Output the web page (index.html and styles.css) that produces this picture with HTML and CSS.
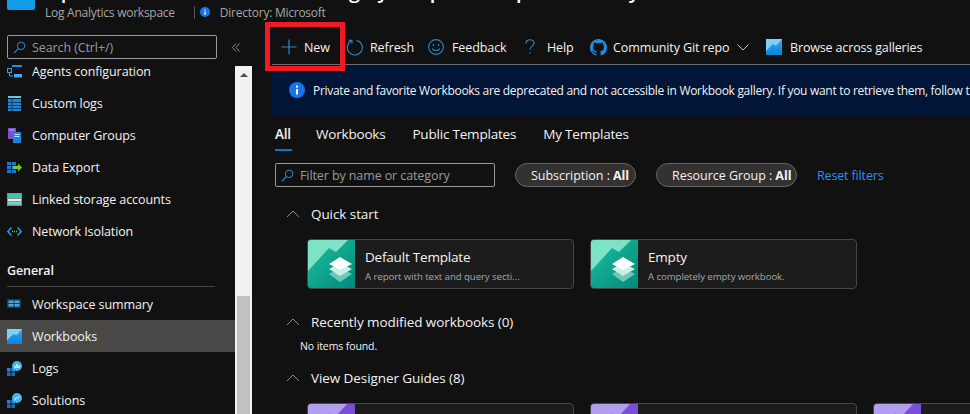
FILE: index.html
```html
<!DOCTYPE html>
<html lang="en">
<head>
    <meta charset="UTF-8">
    <meta name="viewport" content="width=device-width, initial-scale=1.0">
    <title>Workbooks</title>
    <link rel="stylesheet" href="styles.css">
</head>
<body>
    <svg class="defs" width="0" height="0">
        <defs>
            <linearGradient id="tealBg" x1="0" y1="0" x2="1" y2="1"><stop offset="0" stop-color="#1fbfa0"/><stop offset="1" stop-color="#008a78"/></linearGradient>
            <linearGradient id="blueBg" x1="0" y1="0" x2="0" y2="1"><stop offset="0" stop-color="#2fa8f0"/><stop offset="1" stop-color="#0a84e0"/></linearGradient>
            <symbol id="thumbTeal" viewBox="0 0 48 50">
                <rect width="48" height="50" fill="url(#tealBg)"/>
                <polygon points="0,0 42,0 29,13 22,9 0,33" fill="#7de3c6"/>
                <polygon points="33,29 45,35 33,43 22,35" fill="#6fc9b8"/>
                <polygon points="33,24 45,30 33,37 22,30" fill="#c9efe6"/>
                <polygon points="33,18 45,25 33,31 22,25" fill="#fff"/>
            </symbol>
            <symbol id="thumbPurple" viewBox="0 0 48 50">
                <rect width="48" height="50" fill="#7a4fd6"/>
                <polygon points="0,0 41,0 29,13 22,10.5 0,33" fill="#b39ded"/>
            </symbol>
            <symbol id="bookIcon" viewBox="0 0 16 16">
                <rect width="16" height="16" fill="url(#blueBg)"/>
                <polygon points="0,0 16,0 10,7 7,5 0,12" fill="#7fd0f7"/>
            </symbol>
            <symbol id="searchIcon" viewBox="0 0 16 16">
                <circle cx="10" cy="6" r="4.6" fill="none" stroke="#2a8fdc" stroke-width="1.2"/>
                <line x1="6.7" y1="9.3" x2="1" y2="15" stroke="#2a8fdc" stroke-width="1.4"/>
            </symbol>
            <symbol id="upChevron" viewBox="0 0 14 8">
                <polyline points="1,7 7,1 13,7" fill="none" stroke="#8a8a8a" stroke-width="1"/>
            </symbol>
            <symbol id="infoIcon" viewBox="0 0 16 16">
                <circle cx="8" cy="8" r="8" fill="#1a73e8"/>
                <rect x="7" y="7" width="2" height="5.5" fill="#fff"/>
                <rect x="7" y="3.6" width="2" height="2" fill="#fff"/>
            </symbol>
        </defs>
    </svg>

    <header class="page-head">
        <div class="head-icon"></div>
        <div class="head-text">
            <div class="page-title">Ops Azure Monitor north hub log by a top tenant pool and any</div>
            <div class="page-sub">
                <span>Log Analytics workspace</span>
                <span class="sub-sep"></span>
                <svg class="sub-info" width="10" height="10"><use href="#infoIcon"/></svg>
                <span>Directory: Microsoft</span>
            </div>
        </div>
    </header>

    <div class="layout">
        <aside class="sidebar">
            <div class="side-top">
                <div class="side-search">
                    <svg width="13" height="13"><use href="#searchIcon"/></svg>
                    <span>Search (Ctrl+/)</span>
                </div>
                <svg class="collapse" width="8" height="9" viewBox="0 0 8 9"><path d="M4 0.5L0.5 4.5L4 8.5M7.5 0.5L4 4.5L7.5 8.5" fill="none" stroke="#8a8a8a" stroke-width="1"/></svg>
            </div>
            <div class="side-body">
                <nav class="side-list">
                    <a class="side-item">
                        <svg width="15" height="15" viewBox="0 0 15 15"><rect x="5" y="1" width="10" height="2" fill="#1f8fe0"/><rect x="0.5" y="4.5" width="4" height="4" fill="none" stroke="#3a9be0"/><path d="M2.5 9v3H6" fill="none" stroke="#3a9be0"/><rect x="7" y="10" width="8" height="3.5" fill="#4ba8e8"/></svg>
                        Agents configuration
                    </a>
                    <a class="side-item">
                        <svg width="15" height="15" viewBox="0 0 15 15"><rect x="1" y="0" width="13" height="2" fill="#50d0f5"/><rect x="1" y="3" width="13" height="12" fill="#1f86d8"/><path d="M1 6.5h13M1 9.5h13M1 12.5h13M5 3v12" stroke="#0e3f6a" stroke-width="1"/></svg>
                        Custom logs
                    </a>
                    <a class="side-item">
                        <svg width="15" height="15" viewBox="0 0 15 15"><rect x="1" y="0" width="8" height="11" fill="#7a4fd0"/><rect x="2.5" y="1.5" width="5" height="1" fill="#c9b5f0"/><rect x="6" y="4" width="8" height="11" fill="#1b84e0"/><rect x="7.5" y="6" width="5" height="1" fill="#bfe2fa"/><rect x="7.5" y="8" width="5" height="1" fill="#bfe2fa"/></svg>
                        Computer Groups
                    </a>
                    <a class="side-item">
                        <svg width="15" height="15" viewBox="0 0 15 15"><rect x="0" y="2" width="9" height="11" fill="#1f78c8"/><path d="M0 5.5h9M0 9.5h9M4.5 2v11" stroke="#0d2d4d"/><polygon points="6,6 11,6 11,3.5 15,7.5 11,11.5 11,9 6,9" fill="#7ec832"/></svg>
                        Data Export
                    </a>
                    <a class="side-item">
                        <svg width="15" height="15" viewBox="0 0 15 15"><rect x="0" y="1" width="15" height="13" fill="#8a8f92"/><rect x="1" y="2" width="13" height="4" fill="#3fc4ae"/><rect x="1" y="7" width="13" height="2" fill="#e0f0ee"/><rect x="1" y="10" width="13" height="2.5" fill="#7fd0c4"/></svg>
                        Linked storage accounts
                    </a>
                    <a class="side-item">
                        <svg width="15" height="15" viewBox="0 0 15 15"><polyline points="4.5,3.5 0.8,7.5 4.5,11.5" fill="none" stroke="#2a9fe8" stroke-width="1.4"/><polyline points="10.5,3.5 14.2,7.5 10.5,11.5" fill="none" stroke="#2a9fe8" stroke-width="1.4"/><path d="M5 7.5h1M7 7.5h1M9 7.5h1" stroke="#7ec832" stroke-width="1.4"/></svg>
                        Network Isolation
                    </a>
                    <div class="side-heading">General</div>
                    <a class="side-item">
                        <svg width="15" height="15" viewBox="0 0 15 15"><rect x="0" y="2" width="14" height="9" fill="#123f5f"/><rect x="1.5" y="3.5" width="5" height="2.5" fill="#4aa4dc"/><rect x="7.5" y="3.5" width="5" height="2.5" fill="#4aa4dc"/><rect x="1.5" y="7" width="5" height="2.5" fill="#4aa4dc"/><rect x="7.5" y="7" width="5" height="2.5" fill="#4aa4dc"/></svg>
                        Workspace summary
                    </a>
                    <a class="side-item active">
                        <svg width="15" height="15"><use href="#bookIcon"/></svg>
                        Workbooks
                    </a>
                    <a class="side-item">
                        <svg width="15" height="15" viewBox="0 0 15 15"><rect x="0" y="7" width="3.6" height="3.6" fill="#2a83d0"/><rect x="4.4" y="7" width="3.6" height="3.6" fill="#2a83d0"/><rect x="0" y="11.4" width="3.6" height="3.6" fill="#1f6fb8"/><rect x="4.4" y="11.4" width="3.6" height="3.6" fill="#1f6fb8"/><circle cx="10" cy="5" r="5" fill="#45b4ee"/><path d="M8 7V5M10 7V3M12 7V4.5" stroke="#fff" stroke-width="1.2"/></svg>
                        Logs
                    </a>
                    <a class="side-item">
                        <svg width="15" height="15" viewBox="0 0 15 15"><rect x="0" y="7" width="3.6" height="3.6" fill="#2a83d0"/><rect x="4.4" y="7" width="3.6" height="3.6" fill="#2a83d0"/><rect x="0" y="11.4" width="3.6" height="3.6" fill="#1f6fb8"/><rect x="4.4" y="11.4" width="3.6" height="3.6" fill="#1f6fb8"/><circle cx="10" cy="5" r="5" fill="#45b4ee"/><polyline points="7.5,7 9.5,4.5 10.5,5.5 12.5,3" fill="none" stroke="#fff" stroke-width="1"/></svg>
                        Solutions
                    </a>
                </nav>
                <div class="scrollbar">
                    <span class="scroll-up"></span>
                    <span class="scroll-thumb"></span>
                </div>
            </div>
        </aside>

        <main class="content">
            <div class="toolbar">
                <a class="tool tool-new">
                    <svg width="16" height="16" viewBox="0 0 16 16"><path d="M8 0.5v15M0.5 8h15" stroke="#2a86d0" stroke-width="1.2"/></svg>
                    New
                </a>
                <a class="tool tool-refresh">
                    <svg width="17" height="17" viewBox="0 0 17 17"><path d="M5.5 1.8A7.5 7.5 0 1 0 10.5 1.2" fill="none" stroke="#2a86d0" stroke-width="1.1"/><path d="M2.7 1.4h3.3v3.2" fill="none" stroke="#2a86d0" stroke-width="1.1"/></svg>
                    Refresh
                </a>
                <a class="tool tool-feedback">
                    <svg width="16" height="16" viewBox="0 0 16 16"><circle cx="8" cy="8" r="7.4" fill="none" stroke="#2a86d0" stroke-width="1.1"/><circle cx="5.4" cy="6" r="0.9" fill="#2a86d0"/><circle cx="10.6" cy="6" r="0.9" fill="#2a86d0"/><path d="M4.2 9.6c1.8 2.6 5.8 2.6 7.6 0" fill="none" stroke="#2a86d0" stroke-width="1.1"/></svg>
                    Feedback
                </a>
                <a class="tool tool-help">
                    <svg width="10" height="16" viewBox="0 0 10 16"><path d="M1 4.4C1 2.2 2.8 0.8 5 0.8s4 1.4 4 3.5c0 2.7-4 3-4 6.4" fill="none" stroke="#2a86d0" stroke-width="1.1"/><circle cx="5" cy="14" r="0.8" fill="#2a86d0"/></svg>
                    Help
                </a>
                <a class="tool tool-git">
                    <svg width="17" height="17" viewBox="0 0 16 16"><path fill="#1f8ce0" d="M8 0C3.58 0 0 3.58 0 8c0 3.54 2.29 6.53 5.47 7.59.4.07.55-.17.55-.38 0-.19-.01-.82-.01-1.49-2.01.37-2.53-.49-2.69-.94-.09-.23-.48-.94-.82-1.13-.28-.15-.68-.52-.01-.53.63-.01 1.08.58 1.23.82.72 1.21 1.87.87 2.33.66.07-.52.28-.87.51-1.07-1.78-.2-3.64-.89-3.64-3.95 0-.87.31-1.59.82-2.15-.08-.2-.36-1.02.08-2.12 0 0 .67-.21 2.2.82.64-.18 1.32-.27 2-.27.68 0 1.36.09 2 .27 1.53-1.04 2.2-.82 2.2-.82.44 1.1.16 1.92.08 2.12.51.56.82 1.27.82 2.15 0 3.07-1.87 3.75-3.65 3.95.29.25.54.73.54 1.48 0 1.07-.01 1.93-.01 2.2 0 .21.15.46.55.38A8.013 8.013 0 0016 8c0-4.42-3.58-8-8-8z"/></svg>
                    Community Git repo
                    <svg class="tool-caret" width="12" height="7" viewBox="0 0 12 7"><polyline points="0.5,0.5 6,6 11.5,0.5" fill="none" stroke="#c8c8c8" stroke-width="1"/></svg>
                </a>
                <a class="tool tool-browse">
                    <svg width="16" height="16"><use href="#bookIcon"/></svg>
                    Browse across galleries
                </a>
            </div>

            <div class="banner">
                <svg width="16" height="16"><use href="#infoIcon"/></svg>
                <span>Private and favorite Workbooks are deprecated and not accessible in Workbook gallery. If you want to retrieve them, follow the instructions here.</span>
            </div>

            <div class="tabs">
                <a class="tab selected">All</a>
                <a class="tab">Workbooks</a>
                <a class="tab">Public Templates</a>
                <a class="tab">My Templates</a>
            </div>

            <div class="filters">
                <div class="filter-box">
                    <svg width="13" height="13"><use href="#searchIcon"/></svg>
                    <span>Filter by name or category</span>
                </div>
                <span class="pill pill-sub">Subscription : <b>All</b></span>
                <span class="pill pill-rg">Resource Group : <b>All</b></span>
                <a class="reset">Reset filters</a>
            </div>

            <section class="group group-quick">
                <h3 class="group-title"><svg width="14" height="8"><use href="#upChevron"/></svg>Quick start</h3>
                <div class="gallery">
                    <div class="card">
                        <svg class="thumb" width="48" height="50"><use href="#thumbTeal"/></svg>
                        <div class="card-text">
                            <div class="card-name">Default Template</div>
                            <div class="card-desc">A report with text and query secti...</div>
                        </div>
                    </div>
                    <div class="card">
                        <svg class="thumb" width="48" height="50"><use href="#thumbTeal"/></svg>
                        <div class="card-text">
                            <div class="card-name">Empty</div>
                            <div class="card-desc">A completely empty workbook.</div>
                        </div>
                    </div>
                </div>
            </section>

            <section class="group group-recent">
                <h3 class="group-title"><svg width="14" height="8"><use href="#upChevron"/></svg>Recently modified workbooks (0)</h3>
                <p class="no-items">No items found.</p>
            </section>

            <section class="group group-guides">
                <h3 class="group-title"><svg width="14" height="8"><use href="#upChevron"/></svg>View Designer Guides (8)</h3>
                <div class="gallery">
                    <div class="card"><svg class="thumb" width="48" height="50"><use href="#thumbPurple"/></svg></div>
                    <div class="card"><svg class="thumb" width="48" height="50"><use href="#thumbPurple"/></svg></div>
                    <div class="card"><svg class="thumb" width="48" height="50"><use href="#thumbPurple"/></svg></div>
                </div>
            </section>
        </main>
    </div>

    <div class="new-highlight"></div>
</body>
</html>
```

FILE: styles.css
```css
* {
    box-sizing: border-box;
}
html, body {
    height: 100%;
}
body {
    margin: 0;
    width: 970px;
    height: 414px;
    overflow: hidden;
    position: relative;
    background-color: #111111;
    color: #f2f2f2;
    font-family: "Open Sans", "Noto Sans", Arial, sans-serif;
    font-size: 12.5px;
    letter-spacing: -0.1px;
}
svg {
    display: block;
    flex-shrink: 0;
}
.defs {
    position: absolute;
}

/* top header, the page is scrolled so the title is mostly cut off */
.page-head {
    height: 30px;
    display: flex;
    padding-left: 7px;
}
.head-icon {
    width: 28px;
    height: 10px;
    background-color: #109ce8;
    border-radius: 0 0 2px 2px;
    margin-right: 10px;
}
.page-title {
    height: 4px;
    margin-bottom: 1px;
    overflow: hidden;
    display: flex;
    align-items: flex-end;
    font-size: 20px;
    line-height: 26px;
    font-weight: 600;
    white-space: nowrap;
    color: #fff;
}
.page-sub {
    display: flex;
    align-items: center;
    height: 14px;
    font-size: 12px;
    letter-spacing: -0.25px;
    color: #a6a6a6;
}
.sub-sep {
    width: 1px;
    height: 13px;
    background-color: #555;
    margin: 0 5px 0 19px;
}
.sub-info {
    margin-right: 10px;
}

.layout {
    display: flex;
    height: 384px;
}

/* left menu */
.sidebar {
    width: 252px;
    flex-shrink: 0;
    display: flex;
    flex-direction: column;
    min-height: 0;
}
.side-top {
    display: flex;
    align-items: center;
    padding: 5px 0 3px 7px;
}
.side-search {
    width: 210px;
    height: 24px;
    border: 1px solid #9a9a9a;
    border-radius: 2px;
    display: flex;
    align-items: center;
    gap: 6px;
    padding-left: 5px;
    color: #9a9a9a;
}
.collapse {
    margin-left: 15px;
}
.side-body {
    flex: 1;
    display: flex;
    min-height: 0;
}
.side-list {
    width: 235px;
    overflow: hidden;
}
.side-item {
    display: flex;
    align-items: center;
    gap: 10px;
    height: 32px;
    padding-left: 7px;
}
.side-item:first-child {
    margin-top: -7px;
}
.side-item.active {
    background-color: #4a4846;
}
.side-heading {
    height: 40px;
    margin: 0 20px 1px 7px;
    padding-top: 16px;
    line-height: 16px;
    border-bottom: 1px solid #444;
    font-weight: 600;
}
.scrollbar {
    width: 17px;
    margin-top: 4px;
    background-color: #f1f1f1;
    position: relative;
}
.scroll-up {
    position: absolute;
    left: 5px;
    top: 7px;
    border-left: 4px solid transparent;
    border-right: 4px solid transparent;
    border-bottom: 4px solid #505050;
}
.scroll-thumb {
    position: absolute;
    left: 2px;
    top: 230px;
    width: 13px;
    height: 118px;
    background-color: #c1c1c1;
}

/* right side */
.content {
    flex: 1;
    min-width: 0;
    margin-left: 20px;
    overflow: hidden;
}
.toolbar {
    height: 35px;
    display: flex;
    align-items: center;
    border-bottom: 1px solid #6a6a6a;
    white-space: nowrap;
}
.tool {
    display: flex;
    align-items: center;
}
.tool-new {
    padding-left: 9px;
    gap: 7px;
    width: 74px;
}
.tool-refresh {
    gap: 7px;
    width: 82px;
}
.tool-feedback {
    gap: 8px;
    width: 97px;
}
.tool-help {
    gap: 12px;
    width: 65px;
}
.tool-git {
    gap: 6px;
    width: 176px;
}
.tool-caret {
    margin-left: 2px;
}
.tool-browse {
    gap: 8px;
    letter-spacing: -0.15px;
}
.banner {
    height: 50px;
    background-color: #001537;
    display: flex;
    align-items: center;
    gap: 8px;
    padding-left: 17px;
    white-space: nowrap;
    font-size: 12px;
    letter-spacing: -0.3px;
}
.tabs {
    display: flex;
    height: 36px;
    margin-left: 3px;
    gap: 27px;
    padding-top: 10px;
    font-size: 13.5px;
    letter-spacing: -0.2px;
}
.tab {
    height: 26px;
}
.tab.selected {
    width: 17px;
    margin-right: -3px;
    font-weight: 600;
    border-bottom: 2px solid #0078d4;
}
.filters {
    display: flex;
    align-items: center;
    height: 24px;
    margin: 12px 0 0 3px;
}
.filter-box {
    width: 220px;
    height: 24px;
    border: 1px solid #9a9a9a;
    border-radius: 2px;
    display: flex;
    align-items: center;
    gap: 6px;
    padding-left: 5px;
    color: #9a9a9a;
}
.pill {
    height: 24px;
    border: 1px solid #666;
    border-radius: 12px;
    background-color: #333231;
    display: flex;
    align-items: center;
    gap: 3px;
    padding-left: 15px;
    letter-spacing: -0.03px;
}
.pill-sub {
    width: 121px;
    margin-left: 20px;
}
.pill-rg {
    width: 141px;
    margin-left: 20px;
}
.reset {
    margin-left: 20px;
    color: #2f8fef;
    letter-spacing: -0.15px;
}
.group {
    margin-left: 14px;
}
.group-title {
    margin: 0;
    height: 20px;
    display: flex;
    align-items: center;
    gap: 11px;
    font-size: 13.5px;
    letter-spacing: -0.08px;
    font-weight: 400;
}
.group-quick {
    margin-top: 17px;
}
.group-recent {
    margin-top: 23px;
}
.group-guides {
    margin-top: 15px;
}
.no-items {
    margin: 7px 0 0 14px;
    font-size: 10.5px;
    line-height: 14px;
}
.gallery {
    display: flex;
    gap: 16px;
    margin: 15px 0 0 21px;
}
.card {
    width: 267px;
    height: 50px;
    flex-shrink: 0;
    display: flex;
    background-color: #1c1c1c;
    border: 1px solid #464646;
    border-radius: 4px;
    overflow: hidden;
}
.thumb {
    margin: -1px 0 0 -1px;
}
.card-text {
    padding: 8px 0 0 10px;
}
.card-name {
    font-size: 13.5px;
    line-height: 18px;
    letter-spacing: -0.2px;
}
.card-desc {
    margin-top: 4px;
    font-size: 9.7px;
    line-height: 13px;
    color: #a6a6a6;
}

/* red annotation drawn over the New button */
.new-highlight {
    position: absolute;
    left: 265px;
    top: 22px;
    width: 80px;
    height: 49px;
    border: 5px solid #ed1c24;
}
```
